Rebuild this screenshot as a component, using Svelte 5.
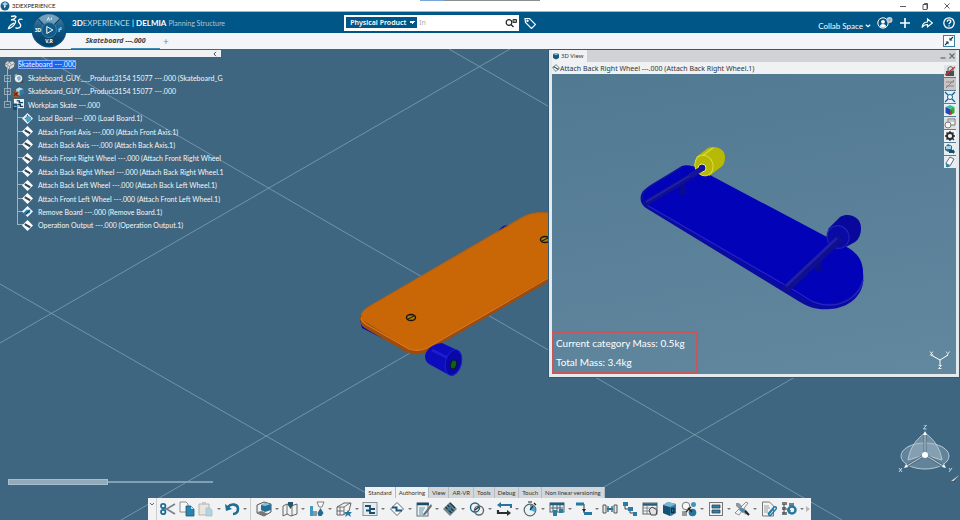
<script>
  const tree = [
    { level: 0, icon: 'root', label: 'Skateboard ---.000', selected: true },
    { level: 1, icon: 'product', toggle: '+', label: 'Skateboard_GUY___Product3154 15077 ---.000 (Skateboard_G' },
    { level: 1, icon: 'process', toggle: '+', label: 'Skateboard_GUY___Product3154 15077 ---.000' },
    { level: 1, icon: 'workplan', toggle: '−', label: 'Workplan Skate ---.000' },
    { level: 2, icon: 'load', label: 'Load Board ---.000 (Load Board.1)' },
    { level: 2, icon: 'op', label: 'Attach Front Axis ---.000 (Attach Front Axis.1)' },
    { level: 2, icon: 'op', label: 'Attach Back Axis ---.000 (Attach Back Axis.1)' },
    { level: 2, icon: 'op', label: 'Attach Front Right Wheel ---.000 (Attach Front Right Wheel' },
    { level: 2, icon: 'op', label: 'Attach Back Right Wheel ---.000 (Attach Back Right Wheel.1' },
    { level: 2, icon: 'op', label: 'Attach Back Left Wheel ---.000 (Attach Back Left Wheel.1)' },
    { level: 2, icon: 'op', label: 'Attach Front Left Wheel ---.000 (Attach Front Left Wheel.1)' },
    { level: 2, icon: 'remove', label: 'Remove Board ---.000 (Remove Board.1)' },
    { level: 2, icon: 'op', label: 'Operation Output ---.000 (Operation Output.1)' }
  ];

  const treeIcons = {
    root: '<path d="M1 5l3-3 3 1 3-1 2 3-1 4-5 3-5-4z" fill="#d9dcdf" stroke="#4a4f54" stroke-width=".7"/><path d="M1 5l5 3 5-3M6 8v4M4 2l4 4M8 2L3 6" stroke="#777" stroke-width=".8" fill="none"/>',
    product: '<path d="M3 1h5l3 3v7H3z" fill="#3c474f"/><circle cx="6" cy="6" r="4.500" fill="#e9f1f6" stroke="#2d5068" stroke-width=".7"/><path d="M4 5l3-2 2 3-3 3z" fill="#7ab0cf"/><path d="M2 3l2-2" stroke="#fff"/>',
    process: '<path d="M3 3l4-2 5 2v5l-5 3-4-3z" fill="#b8dcee" stroke="#214a63" stroke-width=".7"/><path d="M7 5l5-2v5l-5 3z" fill="#2c7ba6"/><path d="M0 6h6v6H0z" fill="#b4511c"/><path d="M1 7l4 4M5 7l-4 4" stroke="#35190d"/>',
    workplan: '<rect x="1" y="0" width="11" height="10" fill="#eef3f6"/><path d="M4 2h3v2h4M5 6h3v2h3" stroke="#17405c" stroke-width="1.500" fill="none"/><path d="M0 5h4l2 3-2 4H0z" fill="#184a6c"/><path d="M1 8h3" stroke="#9fd0eb"/>',
    load: '<path d="M6 0l6 6-6 6-6-6z" fill="#f1f7fa"/><path d="M6 2v8M3 6h6" stroke="#2a3942" stroke-width="1"/><path d="M4 4l3-1 3 2v3l-3 2-3-2z" fill="#4aa0c7"/>',
    remove: '<path d="M6 0l6 6-6 6-6-6z" fill="#f1f7fa"/><path d="M1 8l4-4h4v3l-5 3z" fill="#2d7fa8"/><path d="M4 9l4-4" stroke="#123" stroke-width="1"/>',
    op: '<path d="M6 0l6 6-6 6-6-6z" fill="#fdfdfd"/><path d="M3 4.500l6 3.500" stroke="#2a4455" stroke-width="2.200" fill="none"/>'
  };

  const basic = [
    { id: 'cut', name: 'Cut' },
    { id: 'copy', name: 'Copy' },
    { id: 'paste', name: 'Paste', menu: true },
    { id: 'undo', name: 'Undo', menu: true }
  ];
  const authoring = [
    { id: 'part', name: 'Insert product', menu: true },
    { id: 'map', name: 'Insert resource', menu: true },
    { id: 'tool', name: 'Assign tool', menu: true },
    { id: 'sheet', name: 'Insert sheet', menu: true },
    { id: 'workplan', name: 'Workplan', menu: true },
    { id: 'operation', name: 'Operation', menu: true },
    { id: 'notes', name: 'Work instructions', menu: true },
    { id: 'material', name: 'Material', menu: true },
    { id: 'links', name: 'Link', menu: true },
    { id: 'loop', name: 'Reorder', menu: true },
    { id: 'timer', name: 'Time', menu: true },
    { id: 'board', name: 'Planning table', menu: true },
    { id: 'step', name: 'Precedence', menu: true },
    { id: 'align', name: 'Align' },
    { id: 'flow', name: 'Flow' },
    { id: 'table', name: 'Table' },
    { id: 'cube', name: 'Digital mockup' },
    { id: 'shapes', name: 'Assignment', menu: true },
    { id: 'list', name: 'Panel', menu: true },
    { id: 'wrench', name: 'Settings', menu: true },
    { id: 'attach', name: 'Attach document' },
    { id: 'refresh', name: 'Update structure', menu: true }
  ];

  const icons = {
    cut: '<path d="M15 3L5 9M15 13L5 7" stroke="#75828b" stroke-width="1.6"/><circle cx="3.2" cy="5" r="2.2" fill="none" stroke="#1f6d95" stroke-width="1.8"/><circle cx="3.2" cy="11" r="2.2" fill="none" stroke="#1f6d95" stroke-width="1.8"/>',
    copy: '<path d="M1 1h6l2 2v8H1z" fill="#f5f7f8" stroke="#777" stroke-width=".8"/><path d="M7 5h5l3 3v7H7z" fill="#2b84b0" stroke="#19597a" stroke-width=".8"/><path d="M12 5v3h3" fill="#b8dced"/>',
    paste: '<path d="M1 3h10v11H1z" fill="#e8e6e0" stroke="#b7b3ab"/><path d="M4 1h4v3H4z" fill="#c9c9c9"/><path d="M8 7h4l2 2v6H8z" fill="#b5d2df" stroke="#9fbccb" stroke-width=".7"/>',
    undo: '<path d="M4 6c3-4 10-3 10 2 0 3-2 5-5 5" fill="none" stroke="#1e6d96" stroke-width="2.6"/><path d="M1 3l1 7 6-2z" fill="#1e6d96"/>',
    part: '<path d="M1 4l7-3 7 2v8l-7 4-7-3z" fill="#eef1f2" stroke="#444" stroke-width=".9"/><path d="M5 4l4-2 6 1v6l-6 2-4-2z" fill="#256f96"/><path d="M5 4l4-2 6 1-6 2z" fill="#8ac2de"/><path d="M1 11l7 4 4-2-6-3z" fill="#777"/>',
    map: '<path d="M1 5l4-2 4 2 6-2v10l-6 2-4-2-4 2z" fill="#f2f2f0" stroke="#555" stroke-width=".9"/><path d="M5 3v10M10 5v10" stroke="#555" stroke-width=".8"/><path d="M6 1h5v3L8.500 8 6 4z" fill="#24556e"/>',
    tool: '<path d="M8 1h7l-2 5h-3z" fill="#f8f8f8" stroke="#666" stroke-width=".8"/><path d="M1 5h3v10H1z" fill="#4697bd"/><path d="M4 10h4v5H4z" fill="#8a999f"/><path d="M11.500 7l3 5-2 3h-3l-1-3z" fill="#236b90"/>',
    sheet: '<path d="M1 6l7-4h7l-2 8-6 4H1z" fill="#f3f3f2" stroke="#555" stroke-width=".9"/><path d="M1 6h7v8M8 6l6-4M4 6v8M1 10h7" stroke="#555" stroke-width=".8" fill="none"/><path d="M12 9l1 2h3l-2 2 1 3-3-2-3 2 1-3-2-2h3z" fill="#2678a2"/>',
    workplan: '<rect x="1" y="1.500" width="14" height="13" fill="#e6edf0" stroke="#8a9297"/><path d="M3 5h5v3h5M4 9.500h4v2.500h5" fill="none" stroke="#174e6e" stroke-width="1.800"/>',
    operation: '<path d="M8 1.500l6.500 6.500L8 14.500 1.500 8z" fill="#f8fafb" stroke="#60696f" stroke-width="1"/><path d="M3 6.500h4.500v3H13" fill="none" stroke="#17577a" stroke-width="2"/>',
    notes: '<rect x="1" y="2" width="11" height="13" fill="#f0f2f2" stroke="#607078"/><path d="M1 3h12" stroke="#174e6e" stroke-width="2.500"/><path d="M3 7h6M3 9h5M3 11h4M3 13h5" stroke="#5e94ae"/><path d="M15 3l-7 9-1 3 3-2 6-8z" fill="#686c6e"/>',
    material: '<path d="M8 1l7 7-7 7-7-7z" fill="#75858d"/><path d="M3.500 6l6 6M5.500 4l6 6M8 2l5 5" stroke="#26343c" stroke-width="1.500"/><path d="M5 8l4-4 2 2-4 4z" fill="#347d9f"/>',
    links: '<circle cx="6" cy="6.500" r="4.500" fill="none" stroke="#25668a" stroke-width="1.400"/><circle cx="10" cy="9.500" r="4.500" fill="none" stroke="#60696f" stroke-width="1.400"/><path d="M6 9l4-3" stroke="#333" stroke-width="1.500"/>',
    loop: '<path d="M3 4h12v3" fill="none" stroke="#26759d" stroke-width="2.200"/><path d="M2 9v3h11" fill="none" stroke="#292e31" stroke-width="2.200"/><path d="M5 1v6L1 4z" fill="#26759d"/><path d="M11 9v6l4-3z" fill="#292e31"/>',
    timer: '<circle cx="8" cy="9" r="5.800" fill="#e9f2f6" stroke="#5b646a" stroke-width="1.200"/><path d="M8 9V3.500A5.500 5.500 0 0 1 13 11z" fill="#4ba3cc"/><path d="M6 1h4M12 2l2 2M8 9l3-4" stroke="#222" stroke-width="1.200"/>',
    board: '<rect x="1" y="2" width="14" height="9" fill="#e8edef" stroke="#52636c"/><path d="M1 3h14" stroke="#205e7e" stroke-width="2.500"/><path d="M4 4v7M8 4v7M11 4v7M2 7h12" stroke="#52636c"/><path d="M4 9h4v6H4zM10 8h4v4h-4z" fill="#2d7ca2"/>',
    step: '<path d="M4 3h4v9h4" fill="none" stroke="#333"/><path d="M0 1.500h8v3H0zM8 11h8v3H8z" fill="#2678a0"/><path d="M6 8h4l-2 3z" fill="#222"/>',
    align: '<path d="M1 4h3v8H1zM12 4h3v8h-3z" fill="#e3e9ec" stroke="#555"/><path d="M5 8h6" stroke="#222" stroke-width="1.500"/><path d="M6 5v6M10 5v6" stroke="#2d7ca2" stroke-width="1.500"/>',
    flow: '<path d="M3 4v4h5v4h5" fill="none" stroke="#444"/><path d="M1 1h5v4H1zM6 6h5v4H6zM11 11h4v4h-4z" fill="#2c7aa1"/>',
    table: '<rect x="1" y="2" width="14" height="11" fill="#f4f5f5" stroke="#5b646a"/><path d="M1 3.500h14" stroke="#205e7e" stroke-width="2.500"/><path d="M1 7h14M1 10h14M5 4v9" stroke="#777" stroke-width=".8"/><path d="M7 9l3-3 5 3-1 5h-5z" fill="#e1e1e1" stroke="#444"/>',
    cube: '<path d="M2 4l5-3 8 2v9l-5 3-8-3z" fill="#2a7ea8"/><path d="M2 4l7 2v9l-7-3z" fill="#185171"/><path d="M2 4l5-3 8 2-6 3z" fill="#79b7d4"/><path d="M10.500 7.500H13v4h-2.500z" fill="none" stroke="#0e2d3e" stroke-width="1.300"/>',
    shapes: '<circle cx="5" cy="5" r="3.800" fill="#f5f7f8" stroke="#777"/><circle cx="12.500" cy="3.500" r="2.500" fill="#4095bd"/><path d="M1 10h5v5H1z" fill="#999"/><circle cx="11.500" cy="11.500" r="3.800" fill="#26759d"/><path d="M7 7l4 4M10 6L5 11" stroke="#222" stroke-width="1.200"/>',
    list: '<rect x="1.500" y="1.500" width="13" height="13" fill="#eff1f2" stroke="#777"/><path d="M4 4h8v3H4zM4 9h8v3H4z" fill="#2e80a8" stroke="#263b46" stroke-width=".7"/>',
    wrench: '<path d="M2 2h3l9 9-2 3-10-9z" fill="#8f979b"/><path d="M14 2L5 14l-4-2L12 1z" fill="#f4f4f4" stroke="#777" stroke-width=".8"/><path d="M7 6l4 3-2 3-4-3z" fill="#4d8aa6"/><path d="M11 10l4 4" stroke="#222" stroke-width="2"/>',
    attach: '<path d="M1.500 1h7l4 4v10h-11z" fill="#f3f4f4" stroke="#777"/><path d="M3 5h5M3 7h6M3 9h4M3 11h4" stroke="#888" stroke-width=".8"/><path d="M7 13l6-7c2-1 3 1 2 2l-5 6c-2 1-3 0-2-1l4-5" fill="none" stroke="#277aa4" stroke-width="1.500"/>',
    refresh: '<path d="M1 1h5v3H1zM8 2h5v3H8zM1 6h4v3H1zM1 11h5v3H1z" fill="#777e82"/><path d="M3 3v10M5 8h3" stroke="#444"/><circle cx="11" cy="9" r="3.500" fill="none" stroke="#2879a1" stroke-width="2.500"/><path d="M6 9h4l-2 4z" fill="#2879a1"/>'
  };

  const sections = ['Standard', 'Authoring', 'View', 'AR-VR', 'Tools', 'Debug', 'Touch', 'Non linear versioning'];

  const viewTools = [
    { name: 'Lock view', bg: '#dfe3e6', art: '<path d="M2 6h8v5H2z" fill="#4a4f53"/><path d="M4 6V4c0-3 5-3 5 0v2" fill="none" stroke="#4a4f53"/><path d="M1 10l10-8" stroke="#cf2f35" stroke-width="1.400"/>' },
    { name: 'Hide links', bg: '#c9c5c6', art: '<path d="M2 4h8M2 8h8" stroke="#a39a9c" stroke-width="1.500"/><path d="M2 10l8-8" stroke="#c8656a"/>' },
    { name: 'Fit all in', bg: '#dceffa', art: '<path d="M1 1l3 3M11 1L8 4M1 11l3-3M11 11L8 8" stroke="#1b5c80" stroke-width="1.200"/><circle cx="6" cy="6" r="2.500" fill="#fff" stroke="#1b5c80"/>' },
    { name: 'Orientation', bg: '#e8f0f2', art: '<path d="M1.500 3L6 1l4.500 2L6 5z" fill="#33bca9"/><path d="M1.500 3L6 5v6L1.500 9z" fill="#2744bf"/><path d="M6 5l4.500-2v6L6 11z" fill="#31a642"/><path d="M6 7l2-1v4l-2 1z" fill="#c92f37"/>' },
    { name: 'Sectioning', bg: '#dce2e4', art: '<path d="M4 2h7v6H4z" fill="#f6f6f6" stroke="#777"/><circle cx="4" cy="8" r="3" fill="#f6f6f6" stroke="#777"/><path d="M5 4h5" stroke="#999"/>' },
    { name: 'Options', bg: '#f2f3f4', art: '<circle cx="6" cy="6" r="3" fill="none" stroke="#272b2e" stroke-width="1.800"/><path d="M6 1v2M6 9v2M1 6h2M9 6h2M2.500 2.500l1.500 1.500M8 8l2 2M9.500 2.500L8 4M2.500 9.500L4 8" stroke="#272b2e" stroke-width="1.300"/>' },
    { name: 'Show related', bg: '#e7eef2', art: '<path d="M1 4l3-3 4 2v4L4 9 1 7z" fill="#2f6f92"/><path d="M2 3h5v3H2z" fill="#a9cfe2"/><path d="M5 7h4V6l2 3-2 2v-1H5z" fill="#174e6e"/>' },
    { name: 'Clear', bg: '#e7eef2', art: '<path d="M2 7l4-6 4 2-4 7-3 1z" fill="#f9fbfc" stroke="#3b4d57" stroke-width=".8"/><path d="M2 7l4 2-2 2H2z" fill="#2f86ad"/>' }
  ];
</script>

<div class="app">
  <div class="titlebar">
    <svg class="app-icon" viewBox="0 0 10 10"><circle cx="5" cy="5" r="4.500" fill="#17618e" /><path d="M2 3l3-2 3 2-3 2z" fill="#a7cfe4" /><path d="M4 4v3l2-1.500z" fill="#fff" /></svg>
    <span>3DEXPERIENCE</span>
    <div class="loader"></div>
    <div class="window-buttons">
      <button aria-label="Minimize"><svg viewBox="0 0 8 8"><path d="M1 4.500h6" /></svg></button>
      <button aria-label="Restore"><svg viewBox="0 0 8 8"><path d="M2 2.500h4v5H2zM3.500 2.500v-1h3v5H6" /></svg></button>
      <button aria-label="Close"><svg viewBox="0 0 8 8"><path d="M1.500 1.500l5 5M6.500 1.500l-5 5" /></svg></button>
    </div>
  </div>

  <header class="topbar">
    <svg class="logo" viewBox="0 0 17 16" fill="none" stroke="#fff" stroke-width="1.300"><path d="M4 1.500c4-1 6-.5 4.500 1.200C7.500 4 5 4.800 4 5c4.500-.5 5.500 1 4 3.500C6.500 11 4 13 1.500 13.500 2 11 4 9.500 7 8" /><path d="M15.500 4.500c-2-1-4.500 0-4 2s3.500 3 2 5.200c-1.200 1.800-4 2-5 .8" /></svg>
    <h1><strong>3D</strong>EXPERIENCE <i>|</i> <strong>DELMIA</strong> <small>Planning Structure</small></h1>
    <form class="search" onsubmit={(e) => e.preventDefault()}>
      <select aria-label="Search scope"><option>Physical Product</option></select>
      <input type="text" aria-label="Search" placeholder="In" />
      <button aria-label="Run search"><svg viewBox="0 0 12 10" fill="none" stroke="#222" stroke-width="1.200"><circle cx="4" cy="4.500" r="2.800" /><path d="M6 6.500l2.500 2.500" /><path d="M8 1.500h3.500v3H8zM8 3h3.500" stroke-width=".9" /></svg></button>
    </form>
    <button class="tag" aria-label="6WTags"><svg viewBox="0 0 12 12" fill="none" stroke="#fff" stroke-width="1.200"><path d="M1 1.500h4.500l6 6-4 4-6-6z" /><circle cx="3.500" cy="3.700" r=".6" /></svg></button>
    <div class="account">
      <button class="space">Collab Space <svg viewBox="0 0 6 4"><path d="M.8.8L3 2.800 5.200.8" fill="none" stroke="#fff" stroke-width="1.200" /></svg></button>
      <button class="tool" aria-label="Profile"><svg class="wide" viewBox="0 0 16 12"><circle cx="6" cy="6" r="5.200" fill="none" stroke="#fff" /><circle cx="6" cy="4.800" r="1.900" fill="#fff" /><path d="M2.800 9.200c1-3 5.400-3 6.400 0-2 1.600-4.400 1.600-6.400 0z" fill="#fff" /><circle cx="12.500" cy="3" r="3" fill="#c2ccd3" /><circle cx="12.500" cy="3" r="1" fill="#8797a2" /></svg></button>
      <button class="tool" aria-label="Add"><svg viewBox="0 0 12 12"><path d="M6 1v10M1 6h10" stroke="#fff" stroke-width="1.600" /></svg></button>
      <button class="tool" aria-label="Share"><svg viewBox="0 0 12 12" fill="none" stroke="#fff" stroke-width="1.100"><path d="M1 10.500c.5-4 2.500-5.500 5.500-5.500V2l5 4-5 3.800V7.500C4 7.500 2.500 8 1 10.500z" /></svg></button>
      <button class="tool" aria-label="Help"><svg viewBox="0 0 12 12" fill="none" stroke="#fff" stroke-width="1.300"><circle cx="6" cy="6" r="5.200" /><path d="M4.200 4.700c0-2.300 3.600-2.300 3.600-.2C7.800 5.800 6 5.800 6 7.200M6 8.200v1.200" /></svg></button>
    </div>
  </header>

  <div class="compass">
    <svg viewBox="0 0 36 36">
      <defs><linearGradient id="dome" x1="0" y1="0" x2="0" y2="1"><stop offset="0" stop-color="#4f87aa" /><stop offset=".5" stop-color="#0f5582" /><stop offset="1" stop-color="#023e66" /></linearGradient></defs>
      <circle cx="18" cy="18" r="17.500" fill="#0a4f7b" />
      <circle cx="18" cy="18" r="16" fill="url(#dome)" />
      <path d="M8 6.500C13 1 23 1 28 6.500L22 13a7 7 0 0 0-8 0z" fill="#8db3cb" opacity=".65" />
      <path d="M6.500 6.500l23 23M29.500 6.500l-23 23" stroke="#074167" stroke-width="1" />
      <circle cx="18" cy="18" r="7.500" fill="#115b89" stroke="#4d88aa" stroke-width=".8" />
      <path d="M15.800 14.500l6 3.500-6 3.500z" fill="none" stroke="#fff" stroke-width="1" />
      <path d="M16 8.500l1.500-3 1 3M20 8l.8-2.500" stroke="#fff" stroke-width=".8" fill="none" />
      <g fill="#fff" font-family="Noto Sans, sans-serif" font-weight="700" font-size="5" text-anchor="middle"><text x="7" y="20">3D</text><text x="29" y="20">i²</text><text x="18" y="31">V,R</text></g>
    </svg>
  </div>

  <nav class="tabbar">
    <button class="tab">Skateboard ---.000</button>
    <button class="new-tab" aria-label="New tab">+</button>
    <button class="shrink" aria-label="Exit full view"><svg viewBox="0 0 12 12"><rect x=".5" y=".5" width="11" height="11" fill="#fff" stroke="#3a7fa5" /><path d="M10 2L7 5M2 10l3-3" stroke="#123f5b" stroke-width="1.200" /><path d="M6.500 2.500v3h3zM5.500 9.500v-3h-3z" fill="#123f5b" /></svg></button>
  </nav>

  <main class="viewport">
    <svg class="scene" viewBox="0 49 960 471" preserveAspectRatio="xMidYMid slice">
      <g stroke="#83a0b1" stroke-width=".8">
        <path d="M30 50L842 520M0 590L410 353M0 343L510 49M449 49L560 113M795 377L545 521M0 284L415 521" />
      </g>
      <g fill="#0909a8">
        <path d="M498 233c2-7 8-9 14-7l-10 7z" /><path d="M364 313c2-6 6-8 12-9l-5 7z" /><path d="M360 320l2 8 20 10 6-1-6-8z" />
      </g>
      <path d="M360 316c0 8 1 10 8 14l38 22c8 4 16 3 24-2l130-75v-10L370 310z" fill="#9c4c0c" />
      <path d="M560 213c-20-1-29-1-40 6L368 307c-8 5-9 10-4 14l42 26c6 4 14 4 20 1l134-78v-56z" fill="#c96606" />
      <path d="M361 318c1 4 4 6 8 8l40 23c6 2 12 2 18-1l133-77" fill="none" stroke="#da7826" stroke-width="1.200" />
      <path d="M549 213c-14-1-20 0-30 6L368 307c-6 4-7 7-6 10" fill="none" stroke="#a9601c" stroke-width="1" />
      <ellipse cx="411" cy="317.500" rx="4.500" ry="3" fill="#a87a09" stroke="#15130c" stroke-width="1.400" /><path d="M408 319l6-3" stroke="#15130c" />
      <ellipse cx="545" cy="239.500" rx="4.500" ry="3" fill="#a87a09" stroke="#15130c" stroke-width="1.400" /><path d="M542 241l6-3" stroke="#15130c" />
      <path d="M425 356c1-7 8-12 17-13l17 8-6 25-4-1-20-11c-3-2-4-5-4-8z" fill="#0c0cbc" />
      <path d="M432 350l16 8" stroke="#1d1dce" stroke-width="3" />
      <ellipse cx="453.500" cy="362.500" rx="8" ry="13" transform="rotate(14 453.500 362.500)" fill="#0808a6" stroke="#1f1fce" />
      <ellipse cx="453.500" cy="364.500" rx="3" ry="4.500" transform="rotate(14 453.500 364.500)" fill="#116019" stroke="#0c1626" />
    </svg>

    <aside class="tree-panel">
      <button class="collapse" aria-label="Collapse tree"><svg viewBox="0 0 4 6"><path d="M3 .8L1 3l2 2.200" fill="none" stroke="#555" /></svg></button>
      <ul class="tree">
        {#each tree as node}
          <li class={`level-${node.level}`} class:selected={node.selected}>
            {#if node.toggle}<span class="toggle">{node.toggle}</span>{/if}
            <svg viewBox="0 0 12 12">{@html treeIcons[node.icon]}</svg>
            <span class="label">{node.label}</span>
          </li>
        {/each}
      </ul>
      <div class="scroll"><div></div></div>
    </aside>

    <section class="view-window">
      <div class="view-title">
        <span class="view-tab"><svg viewBox="0 0 8 8"><path d="M1 2l3-1 3 1v4L4 7.500 1 6z" fill="#1c5878" /><path d="M1 2l3-1 3 1-3 1.200z" fill="#88bfd9" /></svg>3D View</span>
        <div class="view-buttons">
          <button aria-label="Minimize view"><svg viewBox="0 0 8 8"><path d="M1.500 6h5" stroke="#666" stroke-width="1.200" /></svg></button>
          <button aria-label="Close view"><svg viewBox="0 0 8 8"><path d="M1.500 1.500l5 5M6.500 1.500l-5 5" stroke="#666" stroke-width="1.100" /></svg></button>
        </div>
      </div>
      <div class="view-caption">
        <svg viewBox="0 0 8 8"><path d="M4 .6l3.400 3.400L4 7.400.6 4z" fill="#fff" stroke="#555" stroke-width=".8" /><path d="M1.500 2.500l5 3" stroke="#1b5c80" stroke-width="1.300" /></svg>
        <span>Attach Back Right Wheel ---.000 (Attach Back Right Wheel.1)</span>
      </div>
      <div class="view-body">
        <svg class="model" viewBox="552 74 404 300">
          <path d="M682 167c5-2 10 0 14 1l12 7 119 63c12 6 22 10 28 16 8 8 9 20 8 29-2 13-14 25-33 26-12 1-20-1-30-7L646 208c-6-4-7-11-3-17z" fill="#0b0ba2" />
          <path d="M682 166c5-2 10 0 14 1l12 7 119 63c12 6 22 10 28 16 8 7 9 18 7 26-3 13-16 24-34 24-11 0-19-2-28-7L646 204c-6-4-6-10 0-15z" fill="#0202b9" />
          <path d="M645 204l152 88c10 6 17 13 32 13 18 0 31-11 34-25" fill="none" stroke="#2323c6" stroke-width="1.300" />
          <path d="M643 200c-3-7 4-12 9-15l30-18" fill="none" stroke="#1111a0" stroke-width="1.500" />
          <path d="M680 184h6v10c-2 2-4 2-6 0zM815 260h7v10c-2 3-5 3-7 0z" fill="#0a0a8e" />
          <path d="M646 203l50-30" stroke="#10108e" stroke-width="6" stroke-linecap="round" /><path d="M646 202l50-30" stroke="#2020ae" stroke-width="2" />
          <path d="M696 157l12-9c8-3 17 1 17 9 0 4-1 8-4 10l-12 9z" fill="#b8b905" />
          <path d="M702 156l11-8" stroke="#d6d73c" stroke-width="1.500" />
          <ellipse cx="704" cy="165.500" rx="9" ry="10.500" transform="rotate(-20 704 165.500)" fill="#b7b804" stroke="#dcdc42" />
          <circle cx="702" cy="168" r="4" fill="#15159a" stroke="#eeed8c" /><path d="M690 176l13-8" stroke="#1414a0" stroke-width="5" />
          <path d="M828 229l12-12c9-5 21 0 21 11 0 6-2 11-6 14l-11 6z" fill="#08089c" />
          <ellipse cx="838" cy="237" rx="11" ry="11.500" transform="rotate(-25 838 237)" fill="#0a0aa4" stroke="#2222b8" stroke-width="1.200" />
          <path d="M787 288l51-48" stroke="#10108e" stroke-width="8" stroke-linecap="round" /><path d="M786 286l51-48" stroke="#2020ae" stroke-width="2.500" />
        </svg>
        <div class="mass">
          <p>Current category Mass: 0.5kg</p>
          <p>Total Mass: 3.4kg</p>
        </div>
        <svg class="mini-axis" viewBox="0 0 22 20" fill="none" stroke="#fff"><path d="M2 5l9 5 8-5M11 10v5" stroke-width="1" /><path d="M1 1.500l3 4M4 1.500l-3 4M17 1.500l1.500 2M20.500 1.500l-2.500 4M9.500 15.500h3l-3 3h3" stroke-width=".8" /></svg>
      </div>
      <div class="view-tools">
        {#each viewTools as tool}
          <button aria-label={tool.name} style:background={tool.bg}><svg viewBox="0 0 12 12">{@html tool.art}</svg></button>
        {/each}
      </div>
    </section>

    <svg class="robot" viewBox="0 0 64 60">
      <ellipse cx="29" cy="31" rx="24" ry="13" fill="#8ea9ba" fill-opacity=".45" stroke="#b9cad4" />
      <path d="M29 8c9 6 15 15 17 27L29 30zM29 8c-9 6-15 15-17 27l17-5z" fill="#a5bac7" fill-opacity=".5" stroke="#c4d2da" stroke-width=".8" />
      <path d="M29 30V9M29 30L11 41M29 30l18 11" stroke="#526f82" stroke-width="3" /><path d="M29 30V9M29 30L11 41M29 30l18 11" stroke="#dfe8ec" stroke-width=".8" />
      <path d="M27 10l2-4 2 4zM8 43l2-4 2 3zM50 43l-2-4-2 3z" fill="#fff" /><circle cx="29" cy="30" r="3" fill="#fff" />
      <path d="M27.500 0h3l-3 4h3M3 43l3 4M6 43l-3 4M53 43l1.500 2M56 43l-3 4" stroke="#e6edf1" stroke-width=".8" fill="none" />
      <path d="M63 50l-8 6 3 0 0 3z" fill="#c9d2d7" /><path d="M63 50l-5 9v-3z" fill="#2c3f4c" />
    </svg>

    <div class="action-bar">
      <div class="sections">
        {#each sections as section, i}
          <button class:active={i < 2}>{section}</button>
        {/each}
      </div>
      <div class="actions">
        <button class="more" aria-label="Hide action bar"><svg viewBox="0 0 6 4"><path d="M1 1l2 2 2-2" fill="none" stroke="#666" /></svg></button>
        <div class="group">
          {#each basic as a}
            <button class="action" class:menu={a.menu} aria-label={a.name}><svg viewBox="0 0 16 16">{@html icons[a.id]}</svg></button>
          {/each}
        </div>
        <div class="group grow">
          {#each authoring as a}
            <button class="action" class:menu={a.menu} aria-label={a.name}><svg viewBox="0 0 16 16">{@html icons[a.id]}</svg></button>
          {/each}
          <button class="next" aria-label="Next actions"></button>
        </div>
      </div>
    </div>
  </main>
</div>

<style>
  :global(body) { margin: 0; }
  .app { position: relative; display: flex; flex-direction: column; height: 100vh; min-height: 420px; overflow: hidden; font-family: Lato, "Noto Sans", sans-serif; font-size: 7px; color: #333; }
  button { display: flex; align-items: center; justify-content: center; margin: 0; padding: 0; border: 0; background: none; font: inherit; color: inherit; }
  svg { display: block; flex: none; }

  .titlebar { position: relative; display: flex; align-items: center; gap: 2px; height: 11px; padding: 0 9px 0 0; background: #fff; border-bottom: 1px solid #9ab9cb; font-size: 6px; color: #222; }
  .app-icon { width: 10px; height: 10px; }
  .loader { position: absolute; top: 0; left: 50%; width: 120px; height: 1px; margin-left: -60px; background: linear-gradient(90deg, #78a7d8 20%, #8b8f94 20%); }
  .window-buttons { display: flex; gap: 14px; margin-left: auto; }
  .window-buttons svg { width: 8px; height: 8px; fill: none; stroke: #333; stroke-width: .8; }

  .topbar { display: flex; align-items: center; height: 21px; padding: 0 5px 0 7px; background: #005686; color: #fff; }
  .logo { width: 17px; height: 16px; }
  h1 { flex: 13 1 0; margin: 0 0 0 48px; font-size: 8px; line-height: 12px; font-weight: 400; color: #c2d8e5; white-space: nowrap; }
  h1 strong { color: #fff; }
  h1 i { font-style: normal; color: #fff; }
  h1 small { font-size: 7px; color: #a6c6d9; }
  .search { display: flex; align-items: center; box-sizing: border-box; width: 175px; height: 16px; padding: 2px; background: #fff; }
  select { appearance: none; box-sizing: border-box; width: 71px; height: 11px; padding: 0 0 0 4px; border: 0; border-radius: 0; font: 600 7px/11px "Noto Sans", sans-serif; color: #fff; background: linear-gradient(135deg, #fff 50%, transparent 50%) 66px 4px / 3px 3px no-repeat, linear-gradient(225deg, #fff 50%, transparent 50%) 63px 4px / 3px 3px no-repeat, #005686; }
  input { flex: 1; min-width: 0; height: 11px; padding: 0 2px; border: 0; font: 7px "Noto Sans", sans-serif; }
  input::placeholder { color: #aaa; }
  .search svg { width: 12px; height: 10px; }
  .tag { margin-left: 5px; }
  .tag svg { width: 12px; height: 12px; }
  .account { flex: 20 1 0; display: flex; align-items: center; justify-content: flex-end; gap: 10px; }
  .space { gap: 2px; padding-top: 6px; margin-right: -8px; font-size: 8px; line-height: 12px; white-space: nowrap; }
  .space svg { width: 6px; height: 4px; }
  .tool svg { width: 12px; height: 12px; }
  .tool svg.wide { width: 16px; }
  .tool:has(.wide) { margin: 0 -4px 0 4px; }

  .compass { position: absolute; z-index: 3; top: 12px; left: 31px; }
  .compass svg { width: 36px; height: 36px; }

  .tabbar { display: flex; align-items: stretch; height: 16px; padding: 0 5px 0 71px; background: #f3f5f8; }
  .tab { width: 89px; padding-bottom: 1px; border-bottom: 1px solid #3e8ab2; font-family: "Noto Sans", sans-serif; font-weight: 700; font-style: italic; color: #444; }
  .new-tab { margin-left: 3px; padding-bottom: 1px; font-size: 10px; color: #888; }
  .shrink { margin-left: auto; }
  .shrink svg { width: 12px; height: 12px; }

  .viewport { position: relative; flex: 1; min-height: 0; background: #3e6680; }
  .scene { position: absolute; inset: 0; width: 100%; height: 100%; }

  .tree-panel { position: relative; display: flex; flex-direction: column; box-sizing: border-box; width: 222px; height: 100%; padding: 1px 1px 35px 0; color: #f3f7f9; }
  .collapse { justify-content: flex-end; height: 7px; padding-right: 4px; background: #f0f1f3; }
  .collapse svg { width: 4px; height: 6px; }
  .tree { display: grid; grid-auto-rows: 1fr; height: 174px; margin: 0 -4px 0 0; padding: 1px 0 0; list-style: none; overflow: hidden; }
  li { position: relative; display: flex; align-items: center; gap: 4px; white-space: nowrap; }
  li svg { position: relative; width: 11px; height: 11px; }
  .level-0 { padding-left: 4px; gap: 3px; }
  .level-1 { padding-left: 4px; }
  .level-2 { padding-left: 22px; gap: 5px; }
  .level-2::before { content: ""; position: absolute; left: 17px; top: -7px; bottom: 50%; width: 6px; border: solid #9db5c3; border-width: 0 0 1px 1px; }
  .toggle { width: 5px; height: 5px; margin-right: -2px; border: 1px solid #93a9b6; font-size: 7px; line-height: 4px; text-align: center; color: #cdd9e0; }
  .level-1::before { content: ""; position: absolute; left: 7px; top: -5px; height: 9px; border-left: 1px solid #9db5c3; }
  .selected .label { background: #1467f5; line-height: 9px; outline: 1px solid #79a9ff; outline-offset: -1px; }
  .scroll { height: 6px; width: 205px; margin: auto 0 0 8px; background: linear-gradient(#0000 2px, #83a0b1 2px 4px, #0000 4px); }
  .scroll div { box-sizing: border-box; width: 100px; height: 6px; background: #8fabbc; border: 1px solid #a9bfcc; }

  .view-window { position: absolute; top: 1px; right: 1px; box-sizing: border-box; width: 410px; border: solid #e4ebef; border-width: 0 3px 3px; box-shadow: 0 0 0 1px #345a73; }
  .view-title { display: flex; height: 12px; background: #cfd3d5; }
  .view-tab { display: flex; align-items: center; gap: 1px; padding: 0 3px 0 0; background: #f0f1f3; font-family: "Noto Sans", sans-serif; font-size: 6px; }
  .view-tab svg { width: 8px; height: 8px; }
  .view-buttons { display: flex; gap: 1px; margin-left: auto; }
  .view-buttons svg { width: 8px; height: 8px; }
  .view-caption { display: flex; align-items: center; height: 12px; background: #eff1f3; font-family: "Noto Sans", sans-serif; white-space: nowrap; }
  .view-caption svg { width: 8px; height: 8px; }
  .view-body { position: relative; background: linear-gradient(170deg, #517992, #62889f); }
  .model { width: 100%; height: auto; }
  .mass { position: absolute; left: 0; bottom: 0; box-sizing: border-box; width: 146px; padding: 1px 2px 0; border: 2px solid #c8575b; font-size: 10px; line-height: 19px; color: #fff; white-space: nowrap; }
  p { margin: 0; }
  .mini-axis { position: absolute; right: 5px; bottom: 4px; width: 22px; height: 20px; }
  .view-tools { position: absolute; top: 15px; right: 0; display: flex; flex-direction: column; gap: 1px; }
  .view-tools button { width: 12px; height: 12px; }
  .view-tools svg { width: 12px; height: 12px; }

  .robot { position: absolute; right: 0; bottom: 35px; width: 64px; height: 60px; }

  .action-bar { position: absolute; left: 148px; right: 149px; bottom: 0; display: flex; flex-direction: column; align-items: center; }
  .sections { display: flex; height: 11px; margin-left: 11px; font-size: 6px; }
  .sections button { padding: 0 3px; background: #d3d7d9; border-right: 1px solid #b5bbbf; color: #333; white-space: nowrap; }
  .sections .active { background: #eff1f2; }
  .actions { display: flex; align-self: stretch; height: 22px; background: #f0f2f3; }
  .more { width: 9px; align-items: flex-start; padding-top: 4px; border-right: 1px solid #ccc; }
  .more svg { width: 6px; height: 4px; }
  .group { display: flex; padding: 0 2px 0 1px; }
  .group + .group { border-left: 1px solid #ccc; padding: 0 1px 0 3px; }
  .grow { flex: 1; justify-content: space-between; }
  .action { width: 19px; }
  .action svg { width: 16px; height: 16px; }
  .menu { width: 26px; gap: 3px; }
  .menu::after { content: ""; border: solid transparent; border-width: 2px 2px 0; border-top-color: #777; }
  .next::after { content: ""; border: solid transparent; border-width: 3px 0 3px 4px; border-left-color: #b5b9bb; }
</style>
